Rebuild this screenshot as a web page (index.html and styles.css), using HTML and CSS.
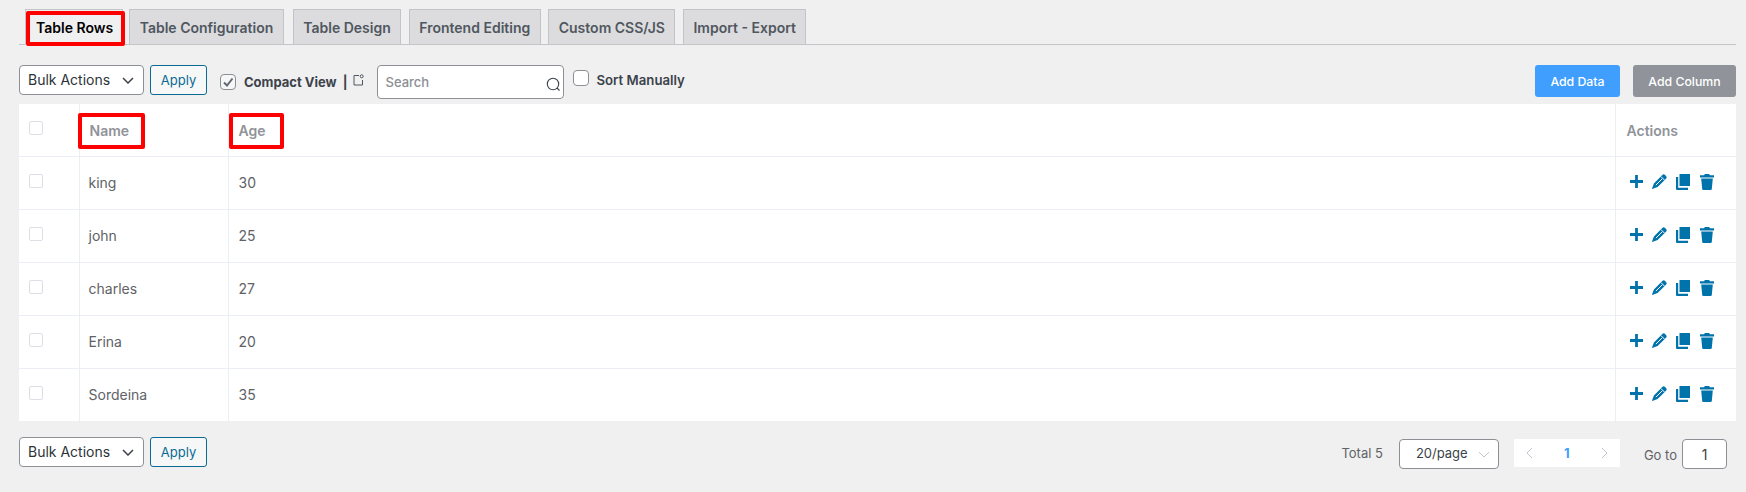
FILE: index.html
```html
<!DOCTYPE html>
<html lang="en">
<head>
<meta charset="utf-8">
<title>Table Rows</title>
<link rel="stylesheet" href="styles.css">
</head>
<body>
<svg class="defs" width="0" height="0" aria-hidden="true">
  <symbol id="i-plus" viewBox="0 0 14 14"><path d="M5.500 0h3v5.500H14v3H8.500V14h-3V8.500H0v-3h5.500z"/></symbol>
  <symbol id="i-pencil" viewBox="0 0 15 15"><path d="M10.300 1a2 2 0 0 1 2.800 0l.9.900a2 2 0 0 1 0 2.800L5.600 13.100.9 14.800a.5.5 0 0 1-.7-.7L1.900 9.400z"/><path class="cut" d="M3.900 11.100l6.300-6.300M9 2.600l3.400 3.400"/></symbol>
  <symbol id="i-copy" viewBox="0 0 14 16"><path d="M3.500 0H14v12H3.500zM0 3h2.200v10.800h9.800V16H1a1 1 0 0 1-1-1z"/></symbol>
  <symbol id="i-trash" viewBox="0 0 14 16"><path d="M5.300 0h3.400c.6 0 1 .4 1.100 1.200H14V3.400H0V1.200h4.200C4.300.4 4.700 0 5.300 0zM1.200 4.600h11.600l-1 10.300a1.200 1.200 0 0 1-1.200 1.100H3.400a1.200 1.200 0 0 1-1.200-1.100z"/></symbol>
</svg>
<main class="page">
  <nav class="tabs">
    <a class="tab tab-active">Table Rows<span class="mark mark-tab"></span></a>
    <a class="tab">Table Configuration</a>
    <a class="tab">Table Design</a>
    <a class="tab">Frontend Editing</a>
    <a class="tab">Custom CSS/JS</a>
    <a class="tab">Import - Export</a>
  </nav>

  <div class="toolbar">
    <div class="select bulk">Bulk Actions<svg class="chev" viewBox="0 0 12 7"><path d="M1 1l5 5 5-5"/></svg></div>
    <button class="apply">Apply</button>
    <label class="check-label compact">
      <span class="box"><svg viewBox="0 0 14 14"><path d="M3 7.500l3 3 5.500-7"/></svg></span>
      <b>Compact View</b><span class="pipe">|</span>
      <svg class="ext" viewBox="0 0 11 12"><path d="M6 1.500H1v9.500h8.500V6"/><circle cx="8.700" cy="2.300" r="1.500"/></svg>
    </label>
    <div class="search">
      <span>Search</span>
      <svg viewBox="0 0 15 15"><circle cx="7" cy="7" r="5.700"/><path d="M11 11l2.500 2.500"/></svg>
    </div>
    <label class="check-label sort"><span class="box"></span><b>Sort Manually</b></label>
    <div class="spacer"></div>
    <button class="btn btn-blue">Add Data</button>
    <button class="btn btn-grey">Add Column</button>
  </div>

  <table class="grid">
    <colgroup><col class="c-check"><col class="c-name"><col><col class="c-act"></colgroup>
    <thead>
      <tr>
        <th><span class="cb"></span></th>
        <th class="name"><span class="th-label">Name<span class="mark mark-name"></span></span></th>
        <th><span class="th-label">Age<span class="mark mark-age"></span></span></th>
        <th class="act">Actions</th>
      </tr>
    </thead>
    <tbody id="rows">
      <tr><td><span class="cb"></span></td><td class="name">king</td><td>30</td><td><div class="acts"><svg class="a-plus"><use href="#i-plus"/></svg><svg class="a-pen"><use href="#i-pencil"/></svg><svg class="a-copy"><use href="#i-copy"/></svg><svg class="a-trash"><use href="#i-trash"/></svg></div></td></tr>
      <tr><td><span class="cb"></span></td><td class="name">john</td><td>25</td><td><div class="acts"><svg class="a-plus"><use href="#i-plus"/></svg><svg class="a-pen"><use href="#i-pencil"/></svg><svg class="a-copy"><use href="#i-copy"/></svg><svg class="a-trash"><use href="#i-trash"/></svg></div></td></tr>
      <tr><td><span class="cb"></span></td><td class="name">charles</td><td>27</td><td><div class="acts"><svg class="a-plus"><use href="#i-plus"/></svg><svg class="a-pen"><use href="#i-pencil"/></svg><svg class="a-copy"><use href="#i-copy"/></svg><svg class="a-trash"><use href="#i-trash"/></svg></div></td></tr>
      <tr><td><span class="cb"></span></td><td class="name">Erina</td><td>20</td><td><div class="acts"><svg class="a-plus"><use href="#i-plus"/></svg><svg class="a-pen"><use href="#i-pencil"/></svg><svg class="a-copy"><use href="#i-copy"/></svg><svg class="a-trash"><use href="#i-trash"/></svg></div></td></tr>
      <tr><td><span class="cb"></span></td><td class="name">Sordeina</td><td>35</td><td><div class="acts"><svg class="a-plus"><use href="#i-plus"/></svg><svg class="a-pen"><use href="#i-pencil"/></svg><svg class="a-copy"><use href="#i-copy"/></svg><svg class="a-trash"><use href="#i-trash"/></svg></div></td></tr>
    </tbody>
  </table>

  <div class="footer">
    <div class="select bulk">Bulk Actions<svg class="chev" viewBox="0 0 12 7"><path d="M1 1l5 5 5-5"/></svg></div>
    <button class="apply">Apply</button>
    <div class="spacer"></div>
    <span class="total">Total 5</span>
    <div class="select size">20/page<svg class="chev light" viewBox="0 0 12 7"><path d="M1 1l5 5 5-5"/></svg></div>
    <div class="pager">
      <svg viewBox="0 0 7 12"><path d="M6 1L1 6l5 5"/></svg>
      <b>1</b>
      <svg viewBox="0 0 7 12"><path d="M1 1l5 5-5 5"/></svg>
    </div>
    <span class="goto">Go to</span>
    <div class="goto-input">1</div>
  </div>
</main>
</body>
</html>
```
FILE: styles.css
```css
* { box-sizing: border-box; }
html, body { margin: 0; height: 492px; overflow: hidden; background: #f0f0f1; }
body { font-family: Inter, "Liberation Sans", sans-serif; color: #3c434a; }
.defs { position: absolute; }
.page { padding: 9px 10px 0 19px; }

.tabs { display: flex; gap: 7.500px; height: 36px; padding-left: 6px; border-bottom: 1px solid #c3c4c7; }
.tab { position: relative; display: flex; align-items: center; justify-content: center; height: 36px; padding: 0 9.500px; background: #dcdcde; border: 1px solid #c3c4c7; font-size: 14px; font-weight: 600; color: #50575e; white-space: nowrap; }
.tab-active { margin-right: -1.500px; padding: 0 9px 0 10px; background: #f0f0f1; color: #000; border-bottom-color: #f0f0f1; }
.tab-active + .tab { margin-right: 1.500px; }
.mark { position: absolute; border: 4px solid #f00; border-radius: 2px; }
.mark-tab { left: 0; right: -3px; top: 1px; bottom: -2px; }
.mark-name { left: -12px; top: -10px; width: 67px; height: 36px; }
.mark-age { left: -10px; top: -10px; width: 55px; height: 36px; }

.toolbar { display: flex; align-items: flex-start; height: 59px; padding-top: 20px; }
.select { position: relative; display: flex; align-items: center; height: 30px; padding-bottom: 2px; background: #fff; border: 1px solid #8c8f94; border-radius: 4px; font-size: 14px; color: #2c3338; }
.bulk { width: 125px; padding-left: 8px; }
.chev { position: absolute; width: 12px; height: 7px; fill: none; stroke: #3c434a; stroke-width: 1.500; right: 9px; top: 11px; }
.chev.light { stroke: #c0c4cc; stroke-width: 1; right: 8px; }
.apply { width: 57px; height: 30px; margin-left: 6px; padding: 0; background: #f6f7f7; border: 1px solid #0a6a94; border-radius: 3px; color: #0a6a94; font: 13px Inter, "Liberation Sans", sans-serif; }
.check-label { display: flex; align-items: center; font-size: 13px; color: #3c434a; }
.check-label b { font-weight: 700; }
.box { display: block; flex: none; width: 16px; height: 16px; background: #fff; border: 1px solid #8c8f94; border-radius: 4px; }
.box svg { display: block; width: 14px; height: 14px; fill: none; stroke: #646970; stroke-width: 2; }
.compact { height: 30px; margin-left: 13px; padding-top: 4px; }
.compact .box { background: #f6f7f7; }
.compact b { margin-left: 8px; }
.pipe { margin-left: 6px; font-size: 13px; font-weight: 700; }
.ext { width: 11px; height: 12px; margin: -5px 0 0 5px; fill: none; stroke: #50575e; stroke-width: 1; }
.search { position: relative; display: flex; align-items: center; width: 187px; height: 34px; margin-left: 13px; padding-left: 8px; background: #fff; border: 1px solid #8c8f94; border-radius: 4px; font-size: 13px; font-weight: 500; color: #8c8f94; }
.search svg { position: absolute; right: 2px; top: 11px; width: 15px; height: 15px; fill: none; stroke: #3c434a; stroke-width: 1.100; }
.sort { height: 30px; margin-left: 9px; padding-bottom: 1px; }
.sort .box { margin-top: -3px; }
.sort b { margin-left: 8px; font-size: 13.200px; font-weight: 600; }
.spacer { flex: 1; }
.btn { height: 32px; border: 0; border-radius: 3px; color: #fff; font: 500 12.300px Inter, "Liberation Sans", sans-serif; }
.btn-blue { width: 85px; background: #409eff; }
.btn-grey { width: 103px; margin-left: 13px; background: #909399; }

.grid { width: 1717px; table-layout: fixed; border-collapse: collapse; background: #fff; font-size: 14px; color: #606266; }
.c-check { width: 60px; }
.c-name { width: 149px; }
.c-act { width: 121px; }
.grid th, .grid td { padding: 0 10px; border-bottom: 1px solid #ebeef5; border-left: 1px solid #ebeef5; text-align: left; vertical-align: middle; }
.grid td { height: 53px; }
.grid th { height: 52px; padding-top: 2px; font-size: 14px; font-weight: 600; color: #909399; }
.grid tr > :first-child { border-left: 0; }
.grid tbody tr:last-child td { border-bottom: 0; }
.grid td.name { padding-left: 9px; }
.grid th.act { padding-left: 11px; }
.th-label { position: relative; display: inline-block; line-height: 16px; }
.cb { display: block; width: 14px; height: 14px; margin: -4px 0 0 0; background: #fff; border: 1px solid #dcdfe6; border-radius: 2px; }
.grid th .cb { margin-top: -6px; }
.acts { display: flex; align-items: center; height: 16px; margin-top: -2px; padding-left: 4px; fill: #0073aa; }
.acts svg { display: block; flex: none; }
.cut { fill: none; stroke: #fff; stroke-width: 1; }
.a-plus { width: 13px; height: 13px; }
.a-pen { width: 15px; height: 15px; margin-left: 9px; }
.a-copy { width: 14px; height: 16px; margin-left: 9px; }
.a-trash { width: 14px; height: 16px; margin-left: 10px; }

.footer { display: flex; align-items: flex-start; padding-top: 16px; padding-right: 9px; }
.total { margin-top: 8px; font-size: 13px; color: #606266; }
.size { width: 100px; margin: 2px 0 0 16px; padding-left: 16px; font-size: 13px; color: #3c434a; }
.pager { display: flex; align-items: center; justify-content: space-between; width: 106px; height: 28px; margin: 2px 0 0 15px; padding: 0 12px; background: #fff; color: #409eff; font-size: 13px; }
.pager svg { width: 7px; height: 12px; fill: none; stroke: #c0c4cc; stroke-width: 1; }
.pager b { font-weight: 700; }
.goto { margin: 10px 0 0 24px; font-size: 13px; color: #606266; }
.goto-input { display: flex; align-items: center; justify-content: center; width: 45px; height: 30px; margin: 2px 0 0 5px; background: #fff; border: 1px solid #8c8f94; border-radius: 4px; font-size: 14px; color: #3c434a; }
```
